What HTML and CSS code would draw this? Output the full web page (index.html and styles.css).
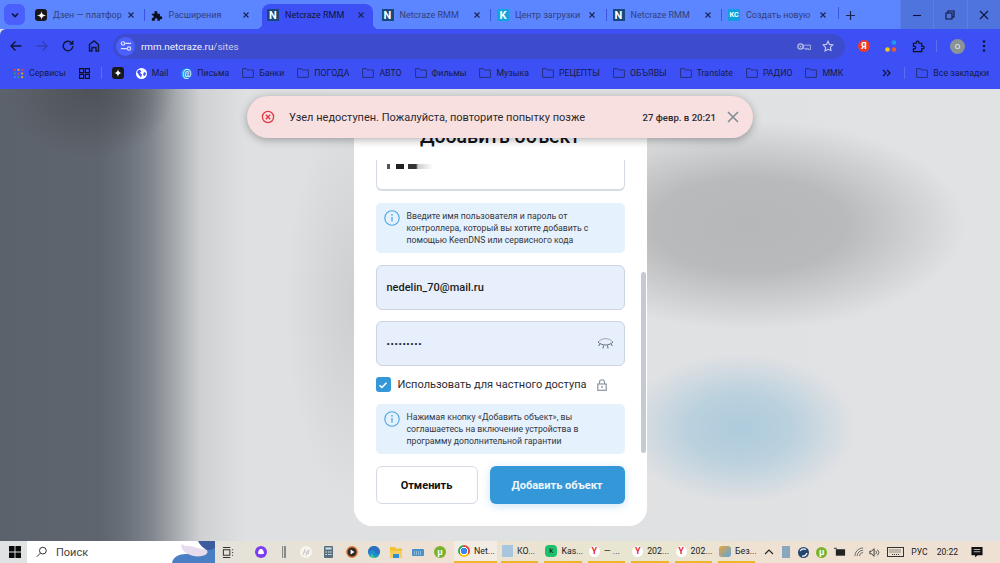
FILE: index.html
```html
<!DOCTYPE html>
<html lang="ru">
<head>
    <meta charset="UTF-8">
    <title>Netcraze RMM</title>
    <link rel="stylesheet" href="styles.css">
</head>
<body>
<div class="screen">
    <!-- Tabs -->
    <div class="tabstrip">
        <div class="tab-search"><svg width="10" height="10" viewBox="0 0 10 10"><path d="M2 3.500l3 3 3-3" fill="none" stroke="#10153a" stroke-width="1.600"/></svg></div>
        <div class="tab">
            <span class="fav fav-dzen"><svg width="9" height="9" viewBox="0 0 10 10"><path d="M5 0c.3 3.200 1.800 4.700 5 5-3.200.3-4.700 1.800-5 5-.3-3.200-1.800-4.700-5-5 3.200-.3 4.700-1.800 5-5z" fill="#fff"/></svg></span>
            <span class="tab-title">Дзен — платфор</span>
            <svg class="tab-x" viewBox="0 0 6 6"><path d="M.5.5l5 5M5.500.5l-5 5"/></svg>
        </div>
        <div class="tab tab-sep">
            <span class="fav"><svg width="13" height="13" viewBox="0 0 14 14"><path d="M1 5h3V3.500a1.700 1.700 0 0 1 3.400 0V5h3v2.800h1a1.800 1.800 0 0 1 0 3.600h-1V13H7.500v-1.200a1.500 1.500 0 0 0-3 0V13H1v-3h1a1.800 1.800 0 0 0 0-3.400H1z" fill="#0d0f1e"/></svg></span>
            <span class="tab-title">Расширения</span>
            <svg class="tab-x" viewBox="0 0 6 6"><path d="M.5.5l5 5M5.500.5l-5 5"/></svg>
        </div>
        <div class="tab tab-active">
            <span class="fav fav-n">N</span>
            <span class="tab-title">Netcraze RMM</span>
            <svg class="tab-x" viewBox="0 0 6 6"><path d="M.5.5l5 5M5.500.5l-5 5"/></svg>
        </div>
        <div class="tab">
            <span class="fav fav-n">N</span>
            <span class="tab-title">Netcraze RMM</span>
            <svg class="tab-x" viewBox="0 0 6 6"><path d="M.5.5l5 5M5.500.5l-5 5"/></svg>
        </div>
        <div class="tab tab-sep">
            <span class="fav fav-k">K</span>
            <span class="tab-title">Центр загрузки</span>
            <svg class="tab-x" viewBox="0 0 6 6"><path d="M.5.5l5 5M5.500.5l-5 5"/></svg>
        </div>
        <div class="tab tab-sep">
            <span class="fav fav-n">N</span>
            <span class="tab-title">Netcraze RMM</span>
            <svg class="tab-x" viewBox="0 0 6 6"><path d="M.5.5l5 5M5.500.5l-5 5"/></svg>
        </div>
        <div class="tab tab-sep">
            <span class="fav fav-kc">КС</span>
            <span class="tab-title">Создать новую</span>
            <svg class="tab-x" viewBox="0 0 6 6"><path d="M.5.5l5 5M5.500.5l-5 5"/></svg>
        </div>
        <div class="tab-new tab-sep"><svg width="9" height="9" viewBox="0 0 9 9"><path d="M4.500 0v9M0 4.500h9" stroke="#1c2450" stroke-width="1.200"/></svg></div>
        <div class="win-controls">
            <div class="win-btn"><svg width="10" height="10" viewBox="0 0 10 10"><path d="M1 5.500h8" stroke="#10153a" stroke-width="1.100"/></svg></div>
            <div class="win-btn"><svg width="10" height="10" viewBox="0 0 10 10"><path d="M1 3h6v6H1zM3 3V1h6v6H7" fill="none" stroke="#10153a" stroke-width="1.100"/></svg></div>
            <div class="win-btn"><svg width="10" height="10" viewBox="0 0 10 10"><path d="M1 1l8 8M9 1l-8 8" stroke="#10153a" stroke-width="1.100"/></svg></div>
        </div>
    </div>

    <!-- Address bar -->
    <div class="toolbar">
        <svg class="tool" width="16" height="16" viewBox="0 0 16 16"><path d="M13.500 8H3M7.500 3.500L3 8l4.500 4.500" fill="none" stroke="#10153a" stroke-width="1.400"/></svg>
        <svg class="tool" width="16" height="16" viewBox="0 0 16 16"><path d="M2.500 8H13M8.500 3.500L13 8l-4.500 4.500" fill="none" stroke="#2f3fb8" stroke-width="1.400"/></svg>
        <svg class="tool" width="16" height="16" viewBox="0 0 16 16"><path d="M12.800 8a4.800 4.800 0 1 1-1.400-3.400L12.800 6M12.800 2.800V6H9.600" fill="none" stroke="#10153a" stroke-width="1.400"/></svg>
        <svg class="tool" width="16" height="16" viewBox="0 0 16 16"><path d="M3.500 6.500L8 3l4.500 3.500v6.500H10V9.500H6V13H3.500z" fill="none" stroke="#10153a" stroke-width="1.400"/></svg>
        <div class="omnibox">
            <span class="site-info"><svg width="12" height="12" viewBox="0 0 14 14"><path d="M6 4h7M1 10h7" stroke="#dfe3ff" stroke-width="1.300"/><circle cx="3.500" cy="4" r="2" fill="none" stroke="#dfe3ff" stroke-width="1.300"/><circle cx="10.500" cy="10" r="2" fill="none" stroke="#dfe3ff" stroke-width="1.300"/></svg></span>
            <span class="url">rmm.netcraze.ru<span class="url-path">/sites</span></span>
            <svg class="omni-key" width="14" height="9" viewBox="0 0 16 10"><circle cx="4" cy="5" r="3" fill="none" stroke="#b6bde8" stroke-width="1.400"/><circle cx="4" cy="5" r="1" fill="#b6bde8"/><path d="M7 3.500h8.500v5H13V7h-1.500v1.500H10V7H7z" fill="none" stroke="#b6bde8"/></svg>
            <svg class="omni-star" width="12" height="12" viewBox="0 0 14 14"><path d="M7 1.500l1.700 3.600 3.900.5-2.900 2.700.8 3.900L7 10.800l-3.500 1.900.8-3.900L1.400 5.600l3.900-.5z" fill="none" stroke="#c8cdf0" stroke-width="1.300"/></svg>
        </div>
        <div class="ext-icons">
            <span class="ext-ya">Я</span>
            <svg width="12" height="12" viewBox="0 0 12 12"><circle cx="9" cy="2.500" r="2.300" fill="#1e9bf0"/><circle cx="2.500" cy="9.500" r="2.300" fill="#f5c518"/><circle cx="9" cy="9.500" r="2.300" fill="#ef5b2b"/></svg>
            <svg width="13" height="13" viewBox="0 0 14 14"><path d="M1.500 3.500h3V2.800a1.500 1.500 0 0 1 3 0v.7h3v3h1a1.500 1.500 0 0 1 0 3h-1v3h-9v-3h.9a1.500 1.500 0 0 0 0-3h-.9z" fill="none" stroke="#0d0f1e" stroke-width="1.300"/></svg>
            <span class="ext-sep"></span>
            <span class="avatar">О</span>
            <svg class="ext-menu" width="4" height="14" viewBox="0 0 4 14"><circle cx="2" cy="2.500" r="1.300" fill="#10153a"/><circle cx="2" cy="7" r="1.300" fill="#10153a"/><circle cx="2" cy="11.500" r="1.300" fill="#10153a"/></svg>
        </div>
    </div>

    <!-- Bookmarks -->
    <div class="bookmarks">
        <span class="bm"><svg width="11" height="11" viewBox="0 0 12 12"><path d="M1 1h2v2H1z" fill="#e8453c"/><path d="M5 1h2v2H5z" fill="#f5b400"/><path d="M9 1h2v2H9z" fill="#e8453c"/><path d="M1 5h2v2H1z" fill="#34a853"/><path d="M5 5h2v2H5z" fill="#e8453c"/><path d="M9 5h2v2H9z" fill="#f5b400"/><path d="M1 9h2v2H1z" fill="#4285f4"/><path d="M5 9h2v2H5z" fill="#34a853"/><path d="M9 9h2v2H9z" fill="#f5b400"/></svg>Сервисы</span>
        <svg class="bm-grid" width="11" height="11" viewBox="0 0 11 11"><path d="M.6.6h4v4h-4zM6.400.6h4v4h-4zM.6 6.400h4v4h-4zM6.400 6.400h4v4h-4z" fill="none" stroke="#0d0f1e" stroke-width="1.200"/></svg>
        <span class="bm-sep"></span>
        <span class="fav fav-dzen bm-icon"><svg width="8" height="8" viewBox="0 0 10 10"><path d="M5 0c.3 3.200 1.800 4.700 5 5-3.200.3-4.700 1.800-5 5-.3-3.200-1.800-4.700-5-5 3.200-.3 4.700-1.800 5-5z" fill="#fff"/></svg></span>
        <span class="bm"><svg width="11" height="11" viewBox="0 0 11 11"><circle cx="5.500" cy="5.500" r="5.500" fill="#fff"/><path d="M3 1.500l2.500 1.500L4 5l2 1.500-1 3-2.500-3L1 4zM8 4l2 1-1 3-2-1z" fill="#3d50f5"/></svg>Mail</span>
        <span class="bm"><span class="bm-at">@</span>Письма</span>
        <span class="bm"><svg class="folder" viewBox="0 0 12 10"><path d="M.6.6h3.800l1 1.400h6v7.400H.6z"/></svg>Банки</span>
        <span class="bm"><svg class="folder" viewBox="0 0 12 10"><path d="M.6.6h3.800l1 1.400h6v7.400H.6z"/></svg>ПОГОДА</span>
        <span class="bm"><svg class="folder" viewBox="0 0 12 10"><path d="M.6.6h3.800l1 1.400h6v7.400H.6z"/></svg>АВТО</span>
        <span class="bm"><svg class="folder" viewBox="0 0 12 10"><path d="M.6.6h3.800l1 1.400h6v7.400H.6z"/></svg>Фильмы</span>
        <span class="bm"><svg class="folder" viewBox="0 0 12 10"><path d="M.6.6h3.800l1 1.400h6v7.400H.6z"/></svg>Музыка</span>
        <span class="bm"><svg class="folder" viewBox="0 0 12 10"><path d="M.6.6h3.800l1 1.400h6v7.400H.6z"/></svg>РЕЦЕПТЫ</span>
        <span class="bm"><svg class="folder" viewBox="0 0 12 10"><path d="M.6.6h3.800l1 1.400h6v7.400H.6z"/></svg>ОБЪЯВЫ</span>
        <span class="bm"><svg class="folder" viewBox="0 0 12 10"><path d="M.6.6h3.800l1 1.400h6v7.400H.6z"/></svg>Translate</span>
        <span class="bm"><svg class="folder" viewBox="0 0 12 10"><path d="M.6.6h3.800l1 1.400h6v7.400H.6z"/></svg>РАДИО</span>
        <span class="bm"><svg class="folder" viewBox="0 0 12 10"><path d="M.6.6h3.800l1 1.400h6v7.400H.6z"/></svg>ММК</span>
        <svg class="bm-more" width="9" height="8" viewBox="0 0 9 8"><path d="M1 1l3 3-3 3M5 1l3 3-3 3" fill="none" stroke="#10153a" stroke-width="1.300"/></svg>
        <span class="bm-sep"></span>
        <span class="bm bm-all"><svg class="folder" viewBox="0 0 12 10"><path d="M.6.6h3.800l1 1.400h6v7.400H.6z"/></svg>Все закладки</span>
    </div>

    <!-- Page -->
    <div class="page">
        <div class="toast">
            <svg width="14" height="14" viewBox="0 0 14 14"><circle cx="7" cy="7" r="5.600" fill="none" stroke="#e5343f" stroke-width="1.300"/><path d="M4.800 4.800l4.400 4.400M9.200 4.800l-4.400 4.400" stroke="#e5343f" stroke-width="1.300"/></svg>
            <span class="toast-text">Узел недоступен. Пожалуйста, повторите попытку позже</span>
            <span class="toast-time">27 февр. в 20:21</span>
            <svg class="toast-close" width="12" height="12" viewBox="0 0 12 12"><path d="M1 1l10 10M11 1L1 11" stroke="#7d8b92" stroke-width="1.500"/></svg>
        </div>
        <div class="modal">
            <h2 class="modal-title">Добавить объект</h2>
            <div class="modal-body">
                <div class="field field-name"><span class="smudge"></span></div>
                <div class="note">
                    <svg width="16" height="16" viewBox="0 0 16 16"><circle cx="8" cy="8" r="7.200" fill="none" stroke="#4aa6e0" stroke-width="1.100"/><path d="M8 7v4.500" stroke="#4aa6e0" stroke-width="1.300"/><circle cx="8" cy="4.800" r=".9" fill="#4aa6e0"/></svg>
                    <p>Введите имя пользователя и пароль от контроллера, который вы хотите добавить с помощью KeenDNS или сервисного кода</p>
                </div>
                <div class="field field-filled field-mail">nedelin_70@mail.ru</div>
                <div class="field field-filled field-pass">
                    <span class="dots">•••••••••</span>
                    <svg width="17" height="13" viewBox="0 0 17 13"><path d="M1 5c4-4.500 11-4.500 15 0" fill="none" stroke="#8f98a3" stroke-width=".9"/><path d="M1 5c4 4 11 4 15 0M3 7L1.500 9M6.500 8.500L6 11.500M10.500 8.500l.5 3M14 7l1.500 2" fill="none" stroke="#5f6a78" stroke-width="1"/></svg>
                </div>
                <div class="check-row">
                    <span class="checkbox"><svg width="10" height="10" viewBox="0 0 10 10"><path d="M1.500 5.200l2.400 2.300 4.600-4.800" fill="none" stroke="#fff" stroke-width="1.500"/></svg></span>
                    <span class="check-label">Использовать для частного доступа</span>
                    <svg width="10" height="12" viewBox="0 0 10 12"><path d="M2.500 5V3.300a2.500 2.500 0 0 1 5 0V5" fill="none" stroke="#8b95a0" stroke-width="1.100"/><rect x=".8" y="5" width="8.400" height="6.300" fill="none" stroke="#8b95a0" stroke-width="1.200"/><circle cx="5" cy="8" r=".9" fill="#8b95a0"/></svg>
                </div>
                <div class="note">
                    <svg width="16" height="16" viewBox="0 0 16 16"><circle cx="8" cy="8" r="7.200" fill="none" stroke="#4aa6e0" stroke-width="1.100"/><path d="M8 7v4.500" stroke="#4aa6e0" stroke-width="1.300"/><circle cx="8" cy="4.800" r=".9" fill="#4aa6e0"/></svg>
                    <p>Нажимая кнопку «Добавить объект», вы соглашаетесь на включение устройства в программу дополнительной гарантии</p>
                </div>
                <div class="actions">
                    <button class="btn btn-cancel">Отменить</button>
                    <button class="btn btn-add">Добавить объект</button>
                </div>
                <div class="scrollbar"></div>
            </div>
        </div>
    </div>

    <!-- Windows taskbar -->
    <div class="taskbar">
        <div class="start"><svg width="12" height="12" viewBox="0 0 13 13"><path d="M0 0h6v6H0zM7 0h6v6H7zM0 7h6v6H0zM7 7h6v6H7z" fill="#0a0a0a"/></svg></div>
        <div class="search">
            <svg width="11" height="12" viewBox="0 0 12 12"><circle cx="7.500" cy="4.500" r="3.700" fill="none" stroke="#222" stroke-width="1"/><path d="M4.800 7.200L.8 11.200" stroke="#222" stroke-width="1"/></svg>
            <span>Поиск</span>
            <svg class="search-art" width="43" height="22" viewBox="0 0 43 22"><path d="M0 22c1-6 7-9 14-9 12 0 22-4 29-12v21z" fill="#4b7fc4"/><path d="M26 0h17v7c-6 4-12 2-17-7z" fill="#3d5c9e"/><path d="M10 3l3 2c6-1 12 3 18 3 5 0 6 4 2 6s-12 2-17-1-8-6-6-10z" fill="#e6dcee"/></svg>
        </div>
        <div class="task-icons">
            <svg width="12" height="13" viewBox="0 0 13 13"><path d="M1 1h8M1 12h8M1.500 3.500h7v6h-7zM11.500 3v1M11.500 6v1M11.500 9v1" fill="none" stroke="#333" stroke-width="1.100"/></svg>
            <svg class="ti-alice" width="12" height="12" viewBox="0 0 12 12"><circle cx="6" cy="6" r="6" fill="#7a3df0"/><path d="M6 2.800c1.800 0 2.800 2.400 3 5-2 .6-4 .6-6 0 .2-2.600 1.200-5 3-5z" fill="#fff"/></svg>
            <span class="ti-bars"></span>
            <svg class="ti-hp" width="12" height="12" viewBox="0 0 12 12"><circle cx="6" cy="6" r="6" fill="#f7f5f2"/><path d="M5 3L3 9M7.500 4.500L6 9.500M4 6h2.500M7.500 4.500h1.500l-.5 3h-1.500" fill="none" stroke="#c9c6c2"/></svg>
            <svg class="ti-calc" width="9" height="12" viewBox="0 0 9 12"><rect width="9" height="12" rx="1" fill="#56707f"/><rect x="1.500" y="1.500" width="6" height="2" fill="#cfe0ea"/><path d="M1.500 5.500h1.500v1H1.500zM4 5.500h1.500v1H4zM6 5.500h1.500v1H6zM1.500 8h1.500v1H1.500zM4 8h1.500v1H4zM6 8h1.500v1H6z" fill="#dfe6ea"/></svg>
            <svg class="ti-play" width="12" height="12" viewBox="0 0 12 12"><circle cx="6" cy="6" r="5.200" fill="#2f2a2a" stroke="#e8773a" stroke-width="1.400"/><path d="M4.600 3.600l3.800 2.400-3.800 2.400z" fill="#fff"/></svg>
            <svg class="ti-edge" width="12" height="12" viewBox="0 0 12 12"><circle cx="6" cy="6" r="6" fill="#1a8fd6"/><path d="M0 6a6 6 0 0 1 12 0c0 1.500-1.500 2-3 2-1 0-1.500-.5-1.500-1 0-2-2-3-4-2.500C2 5 1 6 .5 8z" fill="#2f6fc0"/><path d="M3 11c2 1.500 5 1.300 7-.5-3 1-5 0-5.500-2.500-1.500 0-2.500 1.500-1.500 3z" fill="#45d07a"/></svg>
            <svg class="ti-files" width="12" height="12" viewBox="0 0 12 12"><path d="M0 1h5l1 1.500h6V6H0z" fill="#f2c230"/><path d="M0 5h12v7H8V8.500H4V12H0z" fill="#f5d060"/><path d="M3 8h6v4H3z" fill="#2f8fd8"/></svg>
            <svg class="ti-mail" width="12" height="7" viewBox="0 0 12 7"><rect width="12" height="7" rx="1" fill="#4a90c8"/><path d="M2 3h8M2 5h8" stroke="#cfe3f2" stroke-dasharray="1 1"/></svg>
            <span class="ti-torrent">µ</span>
        </div>
        <div class="task-app task-active"><span class="app-chrome"></span>Net...</div>
        <div class="task-app"><span class="app-doc"></span>КО...</div>
        <div class="task-app"><span class="app-kas">k</span>Kas...</div>
        <div class="task-app"><span class="app-ya">Y</span>— ...</div>
        <div class="task-app"><span class="app-ya">Y</span>202...</div>
        <div class="task-app"><span class="app-ya">Y</span>202...</div>
        <div class="task-app"><span class="app-paint"></span>Без...</div>
        <div class="tray">
            <svg width="10" height="6" viewBox="0 0 10 6"><path d="M1 5l4-4 4 4" fill="none" stroke="#222" stroke-width="1.100"/></svg>
            <span class="tray-box"></span>
            <svg class="tray-round" width="11" height="11" viewBox="0 0 11 11"><circle cx="5.500" cy="5.500" r="5.500" fill="#24456e"/><path d="M2 4c1.500-2 4-2.500 6-1.500M4 9c2 .5 4-.5 5-3" fill="none" stroke="#fff" stroke-width="1.200"/></svg>
            <span class="ti-torrent tray-torrent">µ</span>
            <svg width="12" height="10" viewBox="0 0 13 10"><path d="M2 2h10v7H2z" fill="#222"/><path d="M0 1h3" stroke="#222"/></svg>
            <svg class="tray-wifi" width="10" height="10" viewBox="0 0 11 11"><path d="M1 10a9 9 0 0 1 9-9M3.500 10A6.500 6.500 0 0 1 10 3.500M6 10a4 4 0 0 1 4-4" fill="none" stroke="#666" stroke-width="1"/></svg>
            <svg class="tray-sound" width="11" height="11" viewBox="0 0 13 11"><path d="M1 4h2l3-3v9L3 7H1z" fill="none" stroke="#222"/><path d="M8 3.500a3 3 0 0 1 0 4M10 2a5 5 0 0 1 0 7" fill="none" stroke="#222" stroke-width=".8"/></svg>
            <svg width="17" height="10" viewBox="0 0 17 10"><rect x=".5" y=".5" width="16" height="9" fill="none" stroke="#333"/><path d="M2.500 3h12M2.500 5h12M5 7.500h7" stroke="#333" stroke-dasharray="1 1"/></svg>
            <span class="tray-text">РУС</span>
            <span class="tray-text tray-time">20:22</span>
            <svg class="tray-msg" width="12" height="12" viewBox="0 0 13 13"><path d="M.5 1h12v9H7l-2.500 2.500V10H.5z" fill="#111"/><path d="M3 3.800h7M3 6.200h7" stroke="#eee" stroke-width=".8"/></svg>
        </div>
    </div>
</div>
</body>
</html>
```

FILE: styles.css
```css
* {
    box-sizing: border-box;
}

body {
    margin: 0;
    font-family: Roboto, "Liberation Sans", sans-serif;
    background-color: #dcdfe2;
}

.screen {
    width: 1000px;
    height: 563px;
    display: flex;
    flex-direction: column;
    overflow: hidden;
}

/* Tabs */
.tabstrip {
    height: 29px;
    display: flex;
    align-items: center;
    background-color: #5b86ff;
    padding-left: 4px;
    font-size: 9px;
    color: #34407a;
}

.tab-search {
    width: 21px;
    height: 21px;
    margin-right: 4px;
    border-radius: 6px;
    background-color: #4a5ffb;
    display: flex;
    align-items: center;
    justify-content: center;
}

.tab {
    width: 115.5px;
    height: 25px;
    margin-top: 4px;
    padding: 0 11.5px 3px 6px;
    display: flex;
    align-items: center;
    gap: 6px;
    flex-shrink: 0;
    position: relative;
}

.tab-sep::before {
    content: "";
    position: absolute;
    left: -1px;
    top: 5px;
    width: 1px;
    height: 12px;
    background-color: #3c55e0;
}

.tab-active {
    width: 111px;
    margin-left: 2px;
    margin-right: 2.5px;
    padding-left: 5px;
    padding-right: 9.5px;
    background-color: #3d50f5;
    border-radius: 8px 8px 0 0;
    color: #10153a;
}

.tab-active::before,
.tab-active::after {
    content: "";
    position: absolute;
    bottom: 0;
    width: 6px;
    height: 6px;
}

.tab-active::before {
    left: -6px;
    background: radial-gradient(circle at 0 0, #5b86ff 6px, #3d50f5 6.5px);
}

.tab-active::after {
    right: -6px;
    background: radial-gradient(circle at 100% 0, #5b86ff 6px, #3d50f5 6.5px);
}

.tab-title {
    flex: 1;
    white-space: nowrap;
}

.tab-x {
    width: 6px;
    height: 6px;
    flex-shrink: 0;
    fill: none;
    stroke: #1c2450;
    stroke-width: 1.1;
}

.fav {
    width: 12px;
    height: 12px;
    flex-shrink: 0;
    display: flex;
    align-items: center;
    justify-content: center;
}

.fav-dzen {
    border-radius: 3px;
    background-color: #17171c;
}

.fav-n {
    background-color: #17497c;
    color: #fff;
    font-weight: 700;
    font-size: 11px;
}

.fav-k {
    background-color: #12a5dd;
    color: #fff;
    font-weight: 700;
    font-size: 11px;
}

.fav-kc {
    background-color: #0f9fe0;
    color: #fff;
    font-size: 7px;
    font-weight: 700;
}

.tab-new {
    position: relative;
    margin-left: 8px;
    margin-top: 1px;
    display: flex;
    align-items: center;
}

.tab-new::before {
    left: -8px;
    top: -4px;
}

.win-controls {
    margin-left: auto;
    height: 29px;
    display: flex;
}

.win-btn {
    width: 33.4px;
    display: flex;
    align-items: center;
    justify-content: center;
    background-color: #4f74dd;
    border-left: 1px solid #5b7fe8;
}

/* Address bar */
.toolbar {
    height: 31px;
    display: flex;
    align-items: center;
    background-color: #3d50f5;
    padding-left: 8px;
    padding-top: 3px;
    border-radius: 6px 0 0 0;
}

.tool {
    margin-right: 10px;
}

.omnibox {
    width: 732px;
    height: 25px;
    margin-left: 1px;
    border-radius: 13px;
    background-color: #3d4ccc;
    display: flex;
    align-items: center;
    padding: 0 11px 0 3px;
}

.site-info {
    width: 19px;
    height: 19px;
    border-radius: 50%;
    background-color: #4a5ffb;
    display: flex;
    align-items: center;
    justify-content: center;
    margin-right: 6px;
}

.url {
    flex: 1;
    font-size: 9.9px;
    color: #f0f2ff;
}

.url-path {
    color: #c8cdf0;
}

.omni-key {
    margin-right: 11px;
}

.ext-icons {
    flex: 1;
    display: flex;
    align-items: center;
    gap: 15px;
    padding-left: 13px;
}

.ext-ya {
    width: 12px;
    height: 12px;
    border-radius: 50%;
    background-color: #f03a24;
    color: #fff;
    font-size: 9px;
    font-weight: 700;
    text-align: center;
    line-height: 12px;
}

.ext-sep {
    width: 1px;
    height: 12px;
    margin-left: -4px;
    background-color: #5a70f0;
}

.avatar {
    width: 15px;
    height: 15px;
    margin-left: -2px;
    border-radius: 50%;
    background-color: #8a9497;
    color: #eee;
    font-size: 8px;
    line-height: 15px;
    text-align: center;
}

.ext-menu {
    margin-left: 2px;
}

/* Bookmarks */
.bookmarks {
    height: 29px;
    padding: 0 11px 3px 13px;
    display: flex;
    align-items: center;
    gap: 13px;
    background-color: #3d50f5;
    font-size: 8.75px;
    color: #151b45;
}

.bm {
    display: flex;
    align-items: center;
    gap: 5px;
    white-space: nowrap;
}

.bm-sep {
    width: 1px;
    height: 12px;
    background-color: #5a70f0;
}

.bm-grid + .bm-sep {
    margin-left: -2px;
}

.bm-icon {
    margin-left: -3px;
    margin-right: -1px;
}

.bm-at {
    color: #fff;
    width: 11px;
    height: 11px;
    font-size: 10px;
    line-height: 11px;
    border-radius: 50%;
    background-color: #1a8fe8;
    text-align: center;
}

.folder {
    width: 12px;
    height: 10px;
    fill: none;
    stroke: #28307e;
    stroke-width: 1;
}

.bm-more {
    margin-left: auto;
}

.bm-all {
    margin-left: -2px;
}

/* Page */
.page {
    flex: 1;
    position: relative;
    overflow: hidden;
    display: flex;
    justify-content: center;
    background:
        radial-gradient(ellipse 115px 75px at 740px 339px, #aecbdc 0, rgba(174, 203, 220, 0.75) 45%, rgba(174, 203, 220, 0) 100%),
        radial-gradient(ellipse 215px 105px at 750px 136px, #b6b7b8 0, #b9babb 45%, rgba(185, 186, 187, 0) 100%),
        radial-gradient(ellipse 70px 200px at 355px 215px, #cdcecf 0, rgba(205, 206, 207, 0) 100%),
        radial-gradient(ellipse 85px 70px at 90px 0, #4e5258 0, rgba(78, 82, 88, 0) 100%),
        linear-gradient(90deg, #5c626b 0, #5f656e 100px, #6a7079 125px, #7e848b 150px, #a5a9ae 175px, #ced0d2 200px, #dfe0e2 245px, #e1e2e4 1000px);
}

.toast {
    position: absolute;
    left: 247px;
    top: 7px;
    width: 506px;
    height: 42px;
    z-index: 2;
    border-radius: 21px;
    background-color: #f9e0e0;
    box-shadow: 0 2px 8px rgba(0, 0, 0, 0.3);
    display: flex;
    align-items: center;
    padding: 0 14px;
    color: #2a2a2e;
}

.toast-text {
    flex: 1;
    margin-left: 14px;
    font-size: 11px;
}

.toast-time {
    font-size: 9.6px;
    font-weight: 500;
    margin-right: 11px;
}

.modal {
    position: relative;
    width: 293px;
    margin-top: 31px;
    height: 406px;
    padding-top: 5px;
    border-radius: 0 0 18px 18px;
    background-color: #fff;
    display: flex;
    flex-direction: column;
}

.modal-title {
    margin: 0 0 11px;
    font-size: 19.5px;
    font-weight: 500;
    line-height: 24px;
    text-align: center;
    color: #141418;
}

.modal-body {
    position: relative;
    height: 366px;
    padding: 0 22px;
    display: flex;
    flex-direction: column;
}

.field {
    height: 45px;
    flex-shrink: 0;
    border-radius: 6px;
    border: 1px solid #d5dbe4;
    font-size: 11px;
    font-weight: 500;
    color: #1b1d22;
    padding: 0 10px;
    display: flex;
    align-items: center;
    margin-bottom: 12px;
}

.field-name {
    height: 31px;
    border-top: none;
    border-radius: 0 0 6px 6px;
    border-bottom-width: 2px;
    align-items: flex-start;
}

.smudge {
    width: 46px;
    height: 5px;
    margin-top: 4px;
    background: linear-gradient(90deg, #555 0 3px, transparent 3px 9px, #222 9px 17px, transparent 17px 21px, #333 21px 29px, rgba(60, 60, 60, 0.25) 31px, transparent 46px);
    filter: blur(0.6px);
}

.field-filled {
    background-color: #e8effc;
    border-color: #ccd4e2;
}

.field-mail {
    margin-bottom: 11px;
}

.field-pass {
    justify-content: space-between;
    margin-bottom: 11px;
}

.dots {
    font-size: 9.5px;
    letter-spacing: 0.65px;
}

.note {
    display: flex;
    gap: 7px;
    padding: 7px 8px;
    border-radius: 5px;
    background-color: #e5f1fd;
    margin-bottom: 12px;
    flex-shrink: 0;
}

.note svg {
    flex-shrink: 0;
}

.note p {
    margin: 0;
    font-size: 8.7px;
    line-height: 12px;
    color: #33363d;
}

.check-row {
    display: flex;
    align-items: center;
    gap: 7px;
    height: 15px;
    margin-bottom: 12px;
    font-size: 11px;
    color: #2b2d33;
}

.checkbox {
    width: 15px;
    height: 15px;
    border-radius: 3px;
    background-color: #3498d8;
    display: flex;
    align-items: center;
    justify-content: center;
}

.check-label {
    margin-right: 4px;
}

.actions {
    display: flex;
    gap: 12px;
}

.btn {
    height: 38px;
    border-radius: 6px;
    font-family: inherit;
    font-size: 11px;
    font-weight: 700;
}

.btn-cancel {
    width: 102px;
    background-color: #fff;
    border: 1px solid #d5dbe4;
    color: #111;
}

.btn-add {
    width: 135px;
    border: none;
    background-color: #3498d8;
    color: #eef6fc;
    box-shadow: 0 2px 8px rgba(52, 152, 216, 0.25);
}

.scrollbar {
    position: absolute;
    right: 1px;
    top: 112px;
    width: 5px;
    height: 181px;
    border-radius: 3px;
    background-color: #c4cad2;
}

/* Windows taskbar */
.taskbar {
    height: 22px;
    display: flex;
    align-items: center;
    background: linear-gradient(90deg, #dfe3e5 0, #e5e2d8 250px, #efe1d3 450px, #e7e6d0 640px, #efe2d3 750px, #eee1d3 1000px);
    font-size: 8.8px;
    color: #1c1c1c;
}

.start {
    width: 27px;
    padding-left: 2px;
    display: flex;
    justify-content: center;
}

.search {
    width: 188px;
    height: 22px;
    background-color: #fff;
    display: flex;
    align-items: center;
    gap: 9px;
    padding-left: 9px;
    font-size: 11px;
    color: #444;
}

.search-art {
    margin-left: auto;
}

.task-icons {
    width: 239px;
    display: flex;
    align-items: center;
    gap: 11px;
    padding-left: 7px;
}

.ti-alice {
    margin-left: 10px;
}

.ti-bars {
    width: 4px;
    height: 12px;
    margin-left: 4px;
    background: linear-gradient(90deg, #8a8a8a 0 1.5px, #d8d5ce 1.5px 2.5px, #8a8a8a 2.5px);
}

.ti-hp {
    margin-left: 3px;
}

.ti-calc {
    margin-left: 1px;
}

.ti-play {
    margin-left: 2px;
}

.ti-edge {
    margin-left: -1px;
}

.ti-files,
.ti-mail {
    margin-left: -1px;
}

.ti-torrent {
    width: 12px;
    height: 12px;
    margin-left: -1px;
    flex-shrink: 0;
    border-radius: 50%;
    background-color: #79b32d;
    color: #fff;
    font-size: 9px;
    font-weight: 700;
    line-height: 12px;
    text-align: center;
}

.task-app {
    width: 37.4px;
    height: 22px;
    margin-right: 6px;
    flex-shrink: 0;
    display: flex;
    align-items: center;
    gap: 4px;
    padding-left: 1px;
    border-bottom: 2px solid #f0b429;
    white-space: nowrap;
}

.task-active {
    width: 43px;
    margin-right: 4px;
    padding-left: 4px;
    background-color: #f3ece4;
}

.app-chrome {
    width: 12px;
    height: 12px;
    flex-shrink: 0;
    border-radius: 50%;
    background:
        radial-gradient(circle, #3c86f0 0 3px, #fff 3px 4px, transparent 4px),
        conic-gradient(#e0463a 0 120deg, #f5c518 120deg 240deg, #34a853 240deg);
}

.app-doc {
    width: 11px;
    height: 12px;
    flex-shrink: 0;
    background-color: #a9c6df;
}

.app-kas {
    width: 12px;
    height: 12px;
    flex-shrink: 0;
    border-radius: 4px;
    background-color: #1fc06a;
    color: #111;
    font-size: 8px;
    text-align: center;
    line-height: 12px;
}

.app-ya {
    width: 11px;
    height: 11px;
    flex-shrink: 0;
    border-radius: 50%;
    background-color: #fff;
    color: #e8283a;
    font-size: 9px;
    font-weight: 700;
    text-align: center;
    line-height: 11px;
}

.app-paint {
    width: 12px;
    height: 11px;
    flex-shrink: 0;
    border-radius: 3px;
    background: linear-gradient(135deg, #e8a33a, #5aa7e0);
}

.tray {
    flex: 1;
    margin-left: -6px;
    display: flex;
    align-items: center;
    gap: 7px;
    padding-left: 9px;
}

.tray-box {
    width: 8px;
    height: 12px;
    margin-left: 1px;
    background-color: #8aa7c0;
}

.tray-round {
    margin-left: 1px;
}

.tray-torrent {
    margin-left: 0;
    width: 11px;
    height: 11px;
    line-height: 11px;
}

.tray-wifi {
    margin-left: 1px;
}

.tray-sound {
    margin-left: -2px;
}

.tray-text {
    font-size: 8.6px;
}

.tray-time {
    margin-left: 2px;
}

.tray-msg {
    margin-left: 6px;
}
```
